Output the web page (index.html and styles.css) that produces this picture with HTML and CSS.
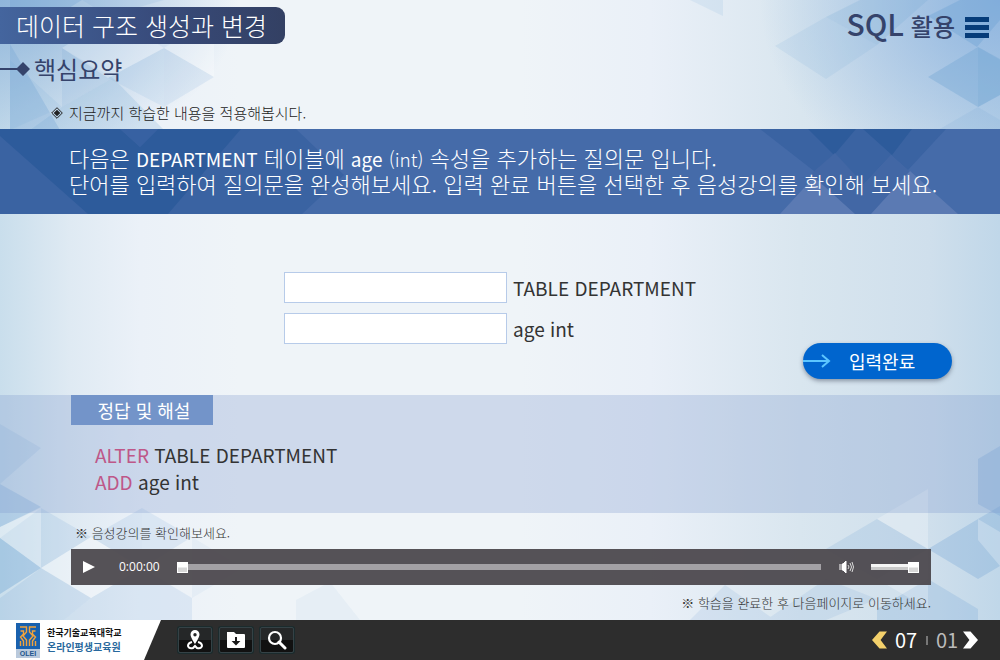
FILE: index.html
```html
<!DOCTYPE html>
<html lang="ko">
<head>
<meta charset="utf-8">
<meta name="viewport" content="width=device-width, initial-scale=1">
<title>데이터 구조 생성과 변경</title>
<link rel="stylesheet" href="styles.css">
</head>
<body>
<div class="lesson">
  <svg class="backdrop" viewBox="0 0 1000 620" preserveAspectRatio="none" aria-hidden="true">
    <g fill="#6fa3d4">
      <path opacity=".3" d="M10 0h72L10 44zM10 44l50 86H10z"/>
      <path opacity=".14" d="M82 0h82L108 16zM62 48l51 30-51 29zM164 48l50 29-50 30z"/>
      <path opacity=".12" d="M10 60l52 47-52 23zM108 78l56-30v59z"/>
      <path opacity=".2" d="M62 107l51-29 51 52H30z"/>
      <path opacity=".12" d="M690 0h33v16zM775 46l51-29v62zM826 17l51 28-51 34z"/>
      <path opacity=".2" d="M826 17L860 0h68l-51 45z"/>
      <path opacity=".4" d="M928 16L960 0h40v20l-23 27z"/>
      <path opacity=".36" d="M928 77l50-30 22 12v36l-22 12z"/>
      <path opacity=".2" d="M978 47l22 13v35l-22 12z"/>
      <path opacity=".14" d="M978 107l22 13v10h-62z"/>
      <path opacity=".16" d="M0 424l41 24L0 484z"/>
      <path opacity=".3" d="M0 484l41 23-41 20z"/>
      <path opacity=".2" d="M0 538l41-30v60L0 594z"/>
      <path opacity=".16" d="M41 508l50 29-50 31zM91 537l51-29v60z"/>
      <path opacity=".22" d="M0 538l41 30-41 26z"/>
      <path opacity=".18" d="M41 568l50 30-27 22H0v-22z"/>
      <path opacity=".14" d="M91 598l51-30 50 30v22H64zM142 508l50 29-50 31z"/>
      <path opacity=".07" d="M192 537l51 31-51 30zM296 600l34-18 30 38h-64z"/>
      <path opacity=".3" d="M978 459l22-13v70l-22-12z"/>
      <path opacity=".3" d="M928 549l50-30v60zM978 519l22-13v60l-22 13z"/>
      <path opacity=".18" d="M826 549l51-30 51 30-51 30z"/>
      <path opacity=".15" d="M826 579l51 20-51 21h-60zM725 585l50 35h-85z"/>
      <path opacity=".24" d="M877 609l51-30 50 30v11H877z"/>
    </g>
    <g fill="#fff">
      <path opacity=".25" d="M62 48l51-32 51 32-56 30zM164 48l50-32v61z"/>
      <path opacity=".35" d="M0 527l41-19v60L0 538zM41 568l50-31v61zM91 537l51 31-51 30z"/>
      <path opacity=".25" d="M978 519l22 13v34l-22-26zM877 519l51-30v60zM877 579l51-30v60z"/>
    </g>
  </svg>

  <header class="top">
    <div class="headings">
      <h1 class="title">데이터 구조 생성과 변경</h1>
      <h2 class="section"><span class="marker"></span>핵심요약</h2>
      <p class="lead">
        <svg width="12" height="12" viewBox="0 0 12 12" aria-hidden="true"><path d="M6 .7L11.3 6 6 11.3.7 6z" fill="none" stroke="#222" stroke-width="1"/><path d="M6 2.7L9.3 6 6 9.3 2.7 6z" fill="#222"/></svg>
        지금까지 학습한 내용을 적용해봅시다.
      </p>
    </div>
    <div class="course">
      <span class="course-name"><span class="course-code">SQL</span> 활용</span>
      <button class="menu" type="button" aria-label="메뉴"><span></span><span></span><span></span></button>
    </div>
  </header>

  <section class="banner">
    <svg class="banner-art" viewBox="0 0 1000 85" preserveAspectRatio="none" aria-hidden="true">
      <path fill="#3a63a2" d="M0 0h296l48 46-42 39H0z"/>
      <path fill="#2d5b9b" d="M0 7V0h120l20 18L158 0h83l-73 85H88z"/>
      <path fill="#3761a2" d="M120 0h38l-18 18z"/>
      <path fill="#3a63a2" d="M760 0h186l-38 41-17-15-41 44-36-28z"/>
      <path fill="#2d5b9b" d="M808 0h104l-20 26L863 0h-7l-22 26z"/>
      <path fill="#4267a5" d="M835 24l56 61h-60l-19-41zM891 26l19 17-39 42-18-18z"/>
      <path fill="#5b7ab3" d="M814 48l41 37h-75zM910 42l48 43h-87z"/>
    </svg>
    <p class="banner-text">다음은 <b>DEPARTMENT</b> 테이블에 <b>age</b> <span class="type">(int)</span> 속성을 추가하는 질의문 입니다.<br>단어를 입력하여 질의문을 완성해보세요. 입력 완료 버튼을 선택한 후 음성강의를 확인해 보세요.</p>
  </section>

  <form class="exercise">
    <div class="blanks">
      <input class="blank" id="first" type="text"><label for="first">TABLE DEPARTMENT</label>
      <input class="blank" id="second" type="text"><label for="second">age int</label>
    </div>
    <button class="submit" type="button">
      <svg width="28" height="16" viewBox="0 0 28 16" aria-hidden="true"><path d="M0 8h26M19 2l7 6-7 6" fill="none" stroke="#5cc6ff" stroke-width="2"/></svg>
      <span>입력완료</span>
    </button>
  </form>

  <section class="answer">
    <h3 class="answer-title">정답 및 해설</h3>
    <p class="answer-text"><span class="keyword">ALTER</span> TABLE DEPARTMENT<br><span class="keyword">ADD</span> age int</p>
  </section>

  <section class="audio">
    <p class="note">※ 음성강의를 확인해보세요.</p>
    <div class="player">
      <button class="play" type="button" aria-label="재생"><svg width="12" height="12" viewBox="0 0 12 12"><path d="M0 0l12 6-12 6z" fill="#fff"/></svg></button>
      <span class="time">0:00:00</span>
      <input class="slider seek" type="range" min="0" max="100" value="0" aria-label="재생 위치">
      <button class="mute" type="button" aria-label="음소거"><svg width="16" height="14" viewBox="0 0 16 14"><path d="M1 4v6M3 4h1l3-3v12l-3-3H3z" fill="#fff" stroke="#fff" stroke-width="1"/><path d="M9 5q2 2 0 4M11 3q3 4 0 8M13 2q3 5 0 10" fill="none" stroke="#ddd"/></svg></button>
      <input class="slider volume" type="range" min="0" max="100" value="100" aria-label="음량">
    </div>
    <p class="note note-end">※ 학습을 완료한 후 다음페이지로 이동하세요.</p>
  </section>
</div>

<footer class="bottom">
  <div class="brand">
    <svg width="24" height="35" viewBox="0 0 24 35" role="img" aria-label="OLEI">
      <path fill="#1961ae" d="M0 0h24v26H0z"/><path fill="#b9c9dc" d="M0 26h24v9H0z"/>
      <path d="M4 4h6.500v5L7 13l3.500 4v6M4.500 8h3v3L4.500 14l3 4v5M4.500 18v5M20 4h-6.500v5l3.500 4-3.500 4v6M19.500 8h-3v3l3 3-3 4v5M19.500 18v5" fill="none" stroke="#f2a33c" stroke-width="1.400"/>
      <text class="logo-text" x="12" y="33" text-anchor="middle">OLEI</text>
    </svg>
    <div class="brand-names"><span>한국기술교육대학교</span><span class="institute">온라인평생교육원</span></div>
  </div>
  <div class="tools">
    <button class="tool" type="button" aria-label="위치"><svg width="20" height="22" viewBox="0 0 20 22"><path d="M7 13Q3 14 3 17q1 3 5 2l2-2 2 2q4 1 5-2 0-3-4-4" fill="none" stroke="#fff" stroke-width="2"/><path fill="#fff" fill-rule="evenodd" d="M10 1a4.500 4.500 0 0 0-4.500 4.500c0 3 4.500 9.500 4.500 9.500s4.500-6.500 4.500-9.500A4.500 4.500 0 0 0 10 1zm0 3a1.700 1.700 0 1 1 0 3.400 1.700 1.700 0 0 1 0-3.400z"/></svg></button>
    <button class="tool" type="button" aria-label="자료 내려받기"><svg width="20" height="18" viewBox="0 0 20 18"><path fill="#fff" d="M1 1h7l2 2h8q1 0 1 1v12q0 1-1 1H2q-1 0-1-1z"/><path d="M10 6v5M8 11h4l-2 2z" fill="#1a1a1a" stroke="#1a1a1a" stroke-width="2"/></svg></button>
    <button class="tool" type="button" aria-label="검색"><svg width="20" height="20" viewBox="0 0 20 20"><circle cx="8" cy="8" r="6" fill="none" stroke="#fff" stroke-width="2.200"/><path d="M12 12l6 6" stroke="#fff" stroke-width="3" stroke-linecap="round"/></svg></button>
  </div>
  <nav class="pager" aria-label="페이지">
    <button class="step" type="button" aria-label="이전"><svg width="15" height="18" viewBox="0 0 14 16"><path d="M0 8L7 0h7L8 8l6 8H7z" fill="#f3d06b"/></svg></button>
    <span class="page">07</span><span class="divider"></span><span class="page total">01</span>
    <button class="step" type="button" aria-label="다음"><svg width="15" height="18" viewBox="0 0 14 16"><path d="M14 8L7 0H0l6 8-6 8h7z" fill="#fff"/></svg></button>
  </nav>
</footer>
</body>
</html>
```
FILE: styles.css
```css
* { box-sizing: border-box; }
body, h1, h2, h3, p { margin: 0; font-weight: 400; }
body {
  min-height: 100vh;
  display: flex;
  flex-direction: column;
  font-family: "Noto Sans CJK KR", sans-serif;
  color: #333;
}
button { border: 0; padding: 0; background: none; font: inherit; color: inherit; display: flex; align-items: center; justify-content: center; cursor: pointer; }

.lesson {
  position: relative;
  z-index: 0;
  flex: 1;
  display: flex;
  flex-direction: column;
  background:
    radial-gradient(ellipse 24% 26% at 0 0, #8fb5da 0, transparent 100%),
    radial-gradient(ellipse 24% 32% at 100% 0, #8fb5df 0, transparent 100%),
    linear-gradient(90deg, #c9deec 0, #dfeaf3 7%, #ebf1f8 14%, #eff4f8 24%, #eff4f8 52%, #eaf0f8 65%, #d9e6ef 80%, #cfdfec 93%, #c0d7e9 100%);
}
.backdrop { position: absolute; inset: 0; width: 100%; height: 100%; z-index: -1; }

.top { display: flex; justify-content: space-between; height: 129px; padding-top: 7px; }
.headings { display: flex; flex-direction: column; }
.title {
  width: 285px;
  padding-left: 16px;
  font-size: 25px;
  line-height: 37px;
  font-weight: 300;
  color: #fff;
  background: linear-gradient(90deg, #44659e, #384b7b 55%, #334063);
  border-radius: 0 9px 9px 0;
}
.section { display: flex; align-items: center; gap: 4px; margin-top: 8px; font-size: 24px; line-height: 34px; color: #35436b; }
.marker { width: 30px; height: 14px; clip-path: polygon(0 6px, 17px 6px, 23px 0, 30px 7px, 23px 14px, 17px 8px, 0 8px); background: #35436b; }
.lead { display: flex; align-items: center; gap: 6px; margin-top: 16px; padding-left: 51px; font-size: 15px; line-height: 22px; font-weight: 300; color: #222; }
.course { display: flex; align-items: center; height: 40px; gap: 10px; padding-right: 11px; }
.course-name { padding-bottom: 5px; font-size: 24px; line-height: 36px; font-weight: 500; color: #35436b; }
.course-code { font-size: 30px; }
.menu { flex-direction: column; gap: 3px; }
.menu span { width: 24px; height: 5px; background: #063c79; }

.banner { position: relative; z-index: 0; background: #456ba9; padding: 15px 49px 18px 69px; color: #fff; }
.banner-art { position: absolute; inset: 0; width: 100%; height: 100%; z-index: -1; }
.banner-text { font-size: 22px; line-height: 26px; font-weight: 300; }
.banner-text b { font-size: 19px; line-height: 1; font-weight: 400; }
.type { font-size: 19px; line-height: 1; }

.exercise { display: flex; flex-direction: column; height: 181px; padding: 58px 48px 16px 284px; }
.blanks { display: grid; grid-template-columns: 223px 1fr; gap: 10px 6px; align-items: center; font-size: 19px; line-height: 31px; }
.blank { width: 100%; height: 31px; padding: 0 8px; border: 1px solid #b7cbe9; background: #fff; font: inherit; }
.submit {
  align-self: flex-end;
  justify-content: flex-start;
  gap: 18px;
  width: 149px;
  height: 36px;
  margin-top: -1px;
  border-radius: 18px;
  background: #0065ce;
  box-shadow: 0 2px 4px rgb(60 70 90 / 50%);
  color: #fff;
  font-size: 18px;
  line-height: 26px;
}

.answer { height: 118px; padding-left: 71px; background: rgb(130 155 205 / 30%); }
.answer-title { width: 142px; font-size: 18px; line-height: 30px; text-align: center; color: #fff; background: #7394c9; padding-left: 4px; }
.answer-text { padding: 16px 24px; font-size: 19px; line-height: 27px; }
.keyword { color: #be5788; }

.audio { flex: 1; display: flex; flex-direction: column; padding: 10px 69px 0 71px; }
.note { padding-left: 4px; font-size: 13px; line-height: 20px; font-weight: 300; margin-bottom: 6px; }
.note-end { text-align: right; margin: 8px 0 0; }
.player { display: flex; align-items: center; height: 36px; padding: 0 12px; background: rgb(75 71 76 / 94%); color: #fff; }
.time { margin-left: 24px; width: 56px; font: 12px/18px "Open Sans", sans-serif; }
.slider { appearance: none; margin: 0; height: 11px; background: linear-gradient(#a3a1a5, #a3a1a5) center / 100% 6px no-repeat; }
.slider::-webkit-slider-thumb { appearance: none; width: 11px; height: 11px; border: 1px solid #fff; background: linear-gradient(#fff 45%, #d7d7d7 55%); }
.seek { flex: 1; margin: 0 18px 0 2px; }
.volume { width: 48px; margin-left: 16px; background: linear-gradient(#f5f5f5 50%, #c9c9c9 50%) center / 100% 6px no-repeat; }

.bottom { display: flex; align-items: center; height: 40px; background: #2d2d2d; color: #fff; }
.brand { display: flex; align-items: center; gap: 7px; width: 161px; height: 40px; padding-left: 16px; background: #fff; clip-path: polygon(0 0, 100% 0, calc(100% - 17px) 100%, 0 100%); color: #111; }
.logo-text { font: 700 7px "Liberation Sans", sans-serif; fill: #24568d; }
.brand-names { display: flex; flex-direction: column; font-size: 9px; line-height: 14px; font-weight: 700; }
.institute { font-size: 10px; color: #28689d; }
.tools { display: flex; gap: 5px; padding-left: 16px; }
.tool { width: 36px; height: 28px; border: 2px solid #1b2b2d; outline: 1px solid #354246; outline-offset: -2px; border-radius: 3px; background: linear-gradient(#252728 50%, #111 50%); }
.pager { display: flex; align-items: center; margin-left: auto; padding-right: 22px; }
.page { margin-left: 8px; width: 24px; font: 20px/28px "Noto Sans CJK KR", sans-serif; }
.divider { width: 2px; height: 9px; margin-left: 7px; background: #777; }
.total { color: #bbb; margin-right: 3px; }
```
